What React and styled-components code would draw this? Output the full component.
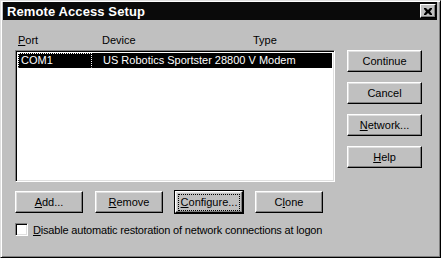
import React from "react";
import styled, { createGlobalStyle } from "styled-components";

const Global = createGlobalStyle`
  html, body {
    margin: 0;
    padding: 0;
    background: #c0c0c0;
  }
  body {
    font-family: "Liberation Sans", Arial, sans-serif;
    font-size: 11px;
    color: #000;
  }
`;

const Window = styled.div`
  box-sizing: border-box;
  width: 441px;
  height: 258px;
  background: #c0c0c0;
  border-top: 1px solid #dfdfdf;
  border-left: 1px solid #dfdfdf;
  border-right: 1px solid #000;
  border-bottom: 1px solid #000;
  box-shadow: inset 1px 1px 0 #fff, inset -1px -1px 0 #808080;
  padding: 1px 3px 2px 2px;
  display: flex;
  flex-direction: column;
`;

const TitleBar = styled.div`
  height: 18px;
  background: #0a0a0a;
  color: #fff;
  display: flex;
  align-items: center;
  justify-content: space-between;
  padding: 0 1px 0 4px;
  & .title {
    font-weight: bold;
    font-size: 13px;
    letter-spacing: 0.1px;
  }
`;

const CloseBox = styled.div`
  box-sizing: border-box;
  width: 16px;
  height: 14px;
  background: #c0c0c0;
  border-top: 1px solid #fff;
  border-left: 1px solid #fff;
  border-right: 1px solid #000;
  border-bottom: 1px solid #000;
  box-shadow: inset -1px -1px 0 #808080;
  display: flex;
  align-items: center;
  justify-content: center;
`;

const Body = styled.div`
  flex-grow: 1;
  display: flex;
  padding: 14px 0 0 12px;
  gap: 12px;
`;

const LeftCol = styled.div`
  width: 320px;
  display: flex;
  flex-direction: column;
`;

const Header = styled.div`
  height: 16px;
  display: flex;
  & span {
    display: inline-block;
  }
  & .port { width: 84px; padding-left: 3px; }
  & .device { width: 151px; }
`;

const ListBox = styled.div`
  box-sizing: border-box;
  height: 132px;
  background: #fff;
  border-top: 1px solid #808080;
  border-left: 1px solid #808080;
  border-right: 1px solid #fff;
  border-bottom: 1px solid #fff;
  box-shadow: inset 1px 1px 0 #000, inset -1px -1px 0 #dfdfdf;
  padding: 2px;
`;

const Row = styled.div`
  height: 15px;
  display: flex;
  align-items: center;
  background: ${(p) => (p.selected ? "#000" : "transparent")};
  color: ${(p) => (p.selected ? "#fff" : "#000")};
`;

const Cell = styled.div`
  box-sizing: border-box;
  height: 15px;
  line-height: 13px;
  width: ${(p) => p.w}px;
  padding-left: ${(p) => p.pad || 0}px;
  border: 1px ${(p) => (p.focus ? "dotted #fff" : "solid transparent")};
  border-bottom-color: transparent;
`;

const BottomRow = styled.div`
  display: flex;
  gap: 12px;
  margin-top: 9px;
`;

const Button = styled.button`
  box-sizing: border-box;
  width: ${(p) => p.w || 68}px;
  height: 22px;
  padding: 0;
  margin: 0;
  font-family: "Liberation Sans", Arial, sans-serif;
  font-size: 11px;
  color: #000;
  background: #c0c0c0;
  border-top: 1px solid #fff;
  border-left: 1px solid #fff;
  border-right: 1px solid #000;
  border-bottom: 1px solid #000;
  box-shadow: inset -1px -1px 0 #808080, inset 1px 1px 0 #dfdfdf;
  outline: ${(p) => (p.focused ? "1px solid #000" : "none")};
  display: flex;
  align-items: center;
  justify-content: center;
  & u { text-decoration: underline; }
  & .focus {
    border: 1px dotted #000;
    padding: 1px 2px;
    line-height: 13px;
  }
`;

const CheckRow = styled.label`
  display: flex;
  align-items: center;
  gap: 5px;
  margin-top: 10px;
  & .text { letter-spacing: -0.18px; }
`;

const CheckBox = styled.span`
  box-sizing: border-box;
  width: 13px;
  height: 13px;
  background: #fff;
  border-top: 1px solid #808080;
  border-left: 1px solid #808080;
  border-right: 1px solid #fff;
  border-bottom: 1px solid #fff;
  box-shadow: inset 1px 1px 0 #000, inset -1px -1px 0 #dfdfdf;
`;

const RightCol = styled.div`
  display: flex;
  flex-direction: column;
  gap: 10px;
  padding-top: 16px;
`;

export default function App() {
  return (
    <>
      <Global />
      <Window>
        <TitleBar>
          <span className="title">Remote Access Setup</span>
          <CloseBox>
            <svg width="8" height="7" viewBox="0 0 8 7">
              <path d="M0 0h2l2 2 2-2h2v1L6 3.5 8 6v1H6L4 5 2 7H0V6l2-2.5L0 1z" fill="#000" />
            </svg>
          </CloseBox>
        </TitleBar>
        <Body>
          <LeftCol>
            <Header>
              <span className="port"><u>P</u>ort</span>
              <span className="device">Device</span>
              <span>Type</span>
            </Header>
            <ListBox>
              <Row selected>
                <Cell w={74} pad={2} focus>COM1</Cell>
                <Cell w={240} pad={10}>US Robotics Sportster 28800 V Modem</Cell>
              </Row>
            </ListBox>
            <BottomRow>
              <Button><span><u>A</u>dd...</span></Button>
              <Button><span><u>R</u>emove</span></Button>
              <Button focused><span className="focus"><u>C</u>onfigure...</span></Button>
              <Button><span>C<u>l</u>one</span></Button>
            </BottomRow>
            <CheckRow>
              <CheckBox />
              <span className="text"><u>D</u>isable automatic restoration of network connections at logon</span>
            </CheckRow>
          </LeftCol>
          <RightCol>
            <Button w={75}>Continue</Button>
            <Button w={75}>Cancel</Button>
            <Button w={75}><span><u>N</u>etwork...</span></Button>
            <Button w={75}><span><u>H</u>elp</span></Button>
          </RightCol>
        </Body>
      </Window>
    </>
  );
}
